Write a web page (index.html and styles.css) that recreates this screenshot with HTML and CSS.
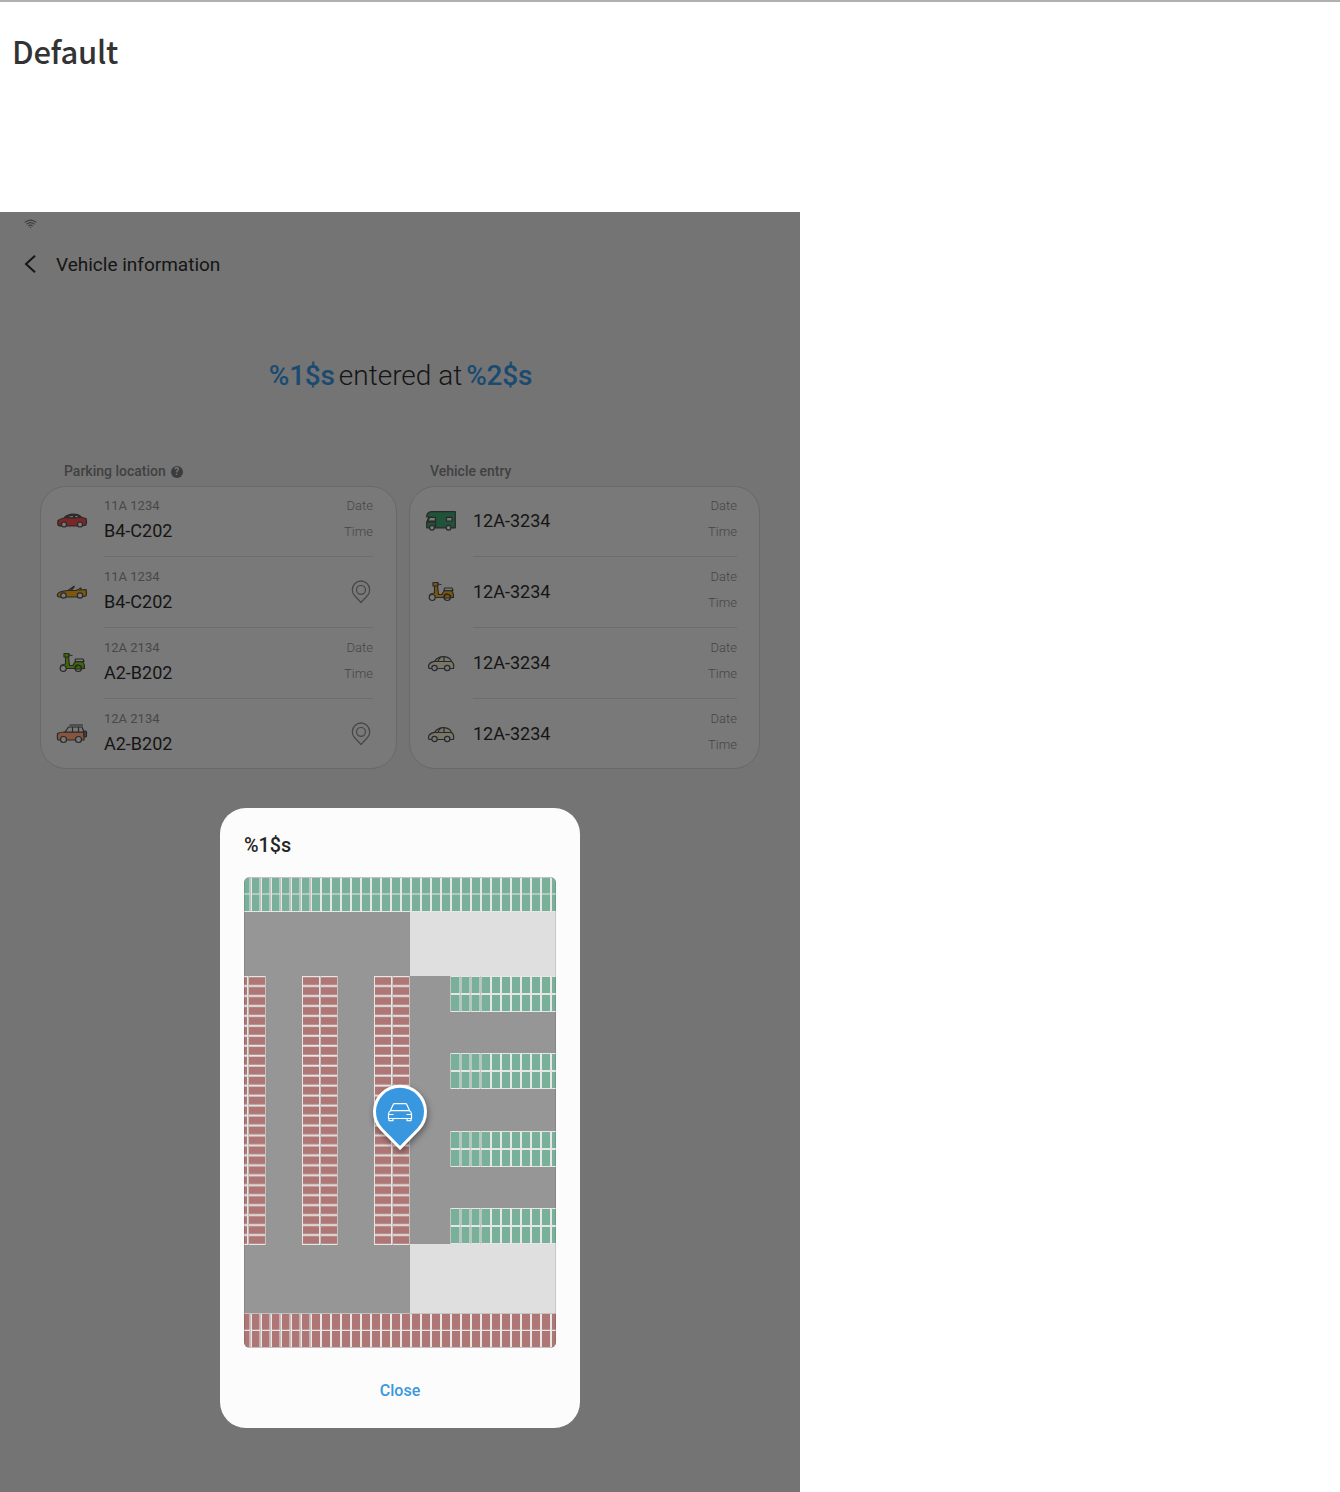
FILE: index.html
```
<!DOCTYPE html>
<html lang="en">
<head>
<meta charset="utf-8">
<title>Vehicle information</title>
<link rel="stylesheet" href="styles.css">
</head>
<body>
<svg class="defs" width="0" height="0" aria-hidden="true">
  <defs>
    <symbol id="sedan" viewBox="0 0 32 32">
      <path class="body" d="M2 15.500Q5 13.500 8 13Q11 9.500 17 9.200Q22 9 26 12.500L30 13.500Q31 17 30 20L26 21H4Q1.500 20.500 1.800 18Z"/>
      <path class="window" d="M10.500 12.800Q13 10.200 17 10.100L18 12.800ZM18.500 10Q22 10.300 24 12.500L19 12.800Z"/>
      <circle class="wheel" cx="8" cy="19.500" r="2.500"/><circle class="wheel" cx="24" cy="19.500" r="2.500"/>
    </symbol>
    <symbol id="convertible" viewBox="0 0 32 32">
      <path class="body" d="M1.500 18Q3 15.300 12 14.500L20 14.500L22 13.500L24 14L30 13.500Q31 17 30 20L25 21H3Q1 21 1.500 18Z"/>
      <path class="line" d="M12 14.500L18.500 10M15 14.500L18.500 10.500M23 12.500L25 12V14"/>
      <circle class="wheel" cx="7.500" cy="19.500" r="2.700"/><circle class="wheel" cx="24" cy="19.500" r="2.700"/>
    </symbol>
    <symbol id="scooter" viewBox="0 0 32 32">
      <path class="body" d="M8 6.500L13 6.500V10H8ZM9.500 10H12.500L13.500 18.500H17Q18 15 21 14.500L27 15Q29 18 28.500 21.500H8L4.500 19.500Q5 17.500 9.500 17Z"/>
      <path class="line" d="M12 8L16.500 8.500"/>
      <path class="wheel" d="M19.500 12H27L28 14.500H19Z"/>
      <circle class="wheel" cx="7.200" cy="21.500" r="3"/><path class="body" d="M18.500 22Q19 17.500 22.500 18Q26 18.500 26 22Z"/><circle class="line" cx="22.300" cy="21.500" r="3"/>
    </symbol>
    <symbol id="suv" viewBox="0 0 32 32">
      <path class="body" d="M1.500 15.500Q4 14 8.500 14H28V22H2Q1 21 1.500 15.500Z"/>
      <path class="window" d="M9 14L12.500 9H26L28 14ZM16.500 9V14M22.500 9V14M13.500 7H27"/>
      <rect class="tyre" x="28" y="13" width="2.500" height="6" rx="1"/>
      <circle class="wheel" cx="7.500" cy="21.500" r="3"/><circle class="wheel" cx="22.500" cy="21.500" r="3"/>
    </symbol>
    <symbol id="camper" viewBox="0 0 32 32">
      <path class="body" d="M1.700 10.500Q3 6.700 7 6.700H30.300V22.800H1.700V17L4 12H1.700Z"/>
      <path class="glass" d="M4.500 12.300H10.500V16H3ZM21.500 12.300H27V16H21.500Z"/>
      <path class="line" d="M10.500 12V22.500M1.500 16.800H10.500"/>
      <circle class="wheel" cx="7" cy="22.800" r="2.400"/><circle class="wheel" cx="23.500" cy="22.800" r="2.400"/>
    </symbol>
    <symbol id="compact" viewBox="0 0 32 32">
      <path class="body" d="M3.500 19.500Q3.500 15.500 9.500 14.300Q13 9.500 19 9.700Q25 10 26.500 14.500Q29.500 16.500 28.500 21.500H4.500Q3.300 21 3.500 19.500Z"/>
      <path class="line" d="M10 14.500H26M19 10V14.500M13 14.300Q14 11 16 10.200"/>
      <circle class="wheel" cx="9.500" cy="21" r="2.700"/><circle class="wheel" cx="22.200" cy="21" r="2.700"/>
    </symbol>
    <symbol id="place" viewBox="0 0 24 24">
      <path d="M12 22.500L5.500 15.500A8.700 8.700 0 1 1 18.500 15.500Z"/><circle cx="12" cy="9.800" r="4.500"/>
    </symbol>
    <pattern id="greenTop" width="10" height="35" patternUnits="userSpaceOnUse">
      <rect class="free" width="10" height="35"/>
      <path class="mark" d="M6 0h2v35h-2zM0 16.500h10v1h-10zM0 34h10v1h-10z"/><path class="edge" d="M0 0h10v1h-10z"/>
    </pattern>
    <pattern id="redBottom" y="436" width="10" height="35" patternUnits="userSpaceOnUse">
      <rect class="taken" width="10" height="35"/>
      <path class="mark" d="M6 0h2v35h-2zM0 16.700h10v1.300h-10z"/><path class="edge" d="M0 0h10v1h-10zM0 34h10v1h-10z"/>
    </pattern>
    <pattern id="rowsRed" y="98.300" width="36" height="9.960" patternUnits="userSpaceOnUse">
      <rect class="taken" width="36" height="10"/><path class="mark" d="M0 9.700h36v.260h-36zM0 0h36v1.700h-36z"/>
    </pattern>
    <path id="softLines" class="soft" d="M5 1h1v33h-1zM15 1h1v33h-1zM25 1h1v33h-1zM35 1h1v33h-1zM45 1h1v33h-1zM55 1h1v33h-1zM65 1h1v33h-1z"/>
    <g id="greenBay">
      <rect class="free" width="106" height="36"/>
      <path class="mark" d="M0 0h106v1h-106zM0 17h106v2h-106zM0 35h106v1h-106zM10 0h1v36h-1zM20 0h1v36h-1zM30 0h1v36h-1zM40 0h2v36h-2zM50 0h2v36h-2zM60 0h2v36h-2zM70 0h2v36h-2zM80 0h2v36h-2zM90 0h2v36h-2zM100 0h2v36h-2z"/>
      <path class="edge" d="M0 0h1v36h-1zM10 0h1v36h-1zM20 0h1v36h-1zM30 0h1v36h-1z"/>
      <path class="soft" d="M9 1h1v34h-1zM11 1h1v34h-1zM19 1h1v34h-1zM21 1h1v34h-1zM29 1h1v34h-1zM31 1h1v34h-1z"/>
    </g>
    <g id="bayFrame"><path class="mark" d="M0 0h36v1h-36zM0 0h1v269h-1zM17 0h1v269h-1zM0 268h36v1h-36z"/><path class="edge" d="M18 0h1v269h-1zM35 0h1v269h-1z"/></g>
  </defs>
</svg>

<header class="page-head"><h1>Default</h1></header>

<main class="screen">
  <div class="status">
    <svg class="wifi" viewBox="0 0 14 10"><path d="M.7 3.300Q7-1.800 13.300 3.300M2.700 5.300Q7 1.800 11.300 5.300M4.700 7.200Q7 5.300 9.300 7.200"/><circle cx="7" cy="8.900" r=".8"/></svg>
  </div>
  <nav class="bar">
    <svg class="back" viewBox="0 0 12 18"><path d="M11 .800L2 9L11 17.200"/></svg>
    <span class="bar-title">Vehicle information</span>
  </nav>
  <p class="notice"><b>%1$s</b><span>entered at</span><b>%2$s</b></p>

  <div class="columns">
    <section class="parking">
      <h2>Parking location <span class="help">?</span></h2>
      <ul class="card">
        <li><svg class="car red"><use href="#sedan"/></svg><div class="row"><div class="id"><small>11A 1234</small><span>B4-C202</span></div><div class="when"><span>Date</span><span>Time</span></div></div></li>
        <li><svg class="car amber"><use href="#convertible"/></svg><div class="row"><div class="id"><small>11A 1234</small><span>B4-C202</span></div><svg class="place"><use href="#place"/></svg></div></li>
        <li><svg class="car lime"><use href="#scooter"/></svg><div class="row"><div class="id"><small>12A 2134</small><span>A2-B202</span></div><div class="when"><span>Date</span><span>Time</span></div></div></li>
        <li><svg class="car copper"><use href="#suv"/></svg><div class="row"><div class="id"><small>12A 2134</small><span>A2-B202</span></div><svg class="place"><use href="#place"/></svg></div></li>
      </ul>
    </section>
    <section class="entry">
      <h2>Vehicle entry</h2>
      <ul class="card">
        <li><svg class="car green"><use href="#camper"/></svg><div class="row"><div class="id"><span>12A-3234</span></div><div class="when"><span>Date</span><span>Time</span></div></div></li>
        <li><svg class="car amber"><use href="#scooter"/></svg><div class="row"><div class="id"><span>12A-3234</span></div><div class="when"><span>Date</span><span>Time</span></div></div></li>
        <li><svg class="car sand"><use href="#compact"/></svg><div class="row"><div class="id"><span>12A-3234</span></div><div class="when"><span>Date</span><span>Time</span></div></div></li>
        <li><svg class="car sand"><use href="#compact"/></svg><div class="row"><div class="id"><span>12A-3234</span></div><div class="when"><span>Date</span><span>Time</span></div></div></li>
      </ul>
    </section>
  </div>

  <div class="dialog" role="dialog">
    <h3>%1$s</h3>
    <div class="map">
      <svg viewBox="0 0 312 471" width="312" height="471" shape-rendering="crispEdges">
        <rect class="road" width="312" height="471"/>
        <path class="block" d="M166 35h146v64h-146zM166 367h146v69h-146z"/>
        <rect width="312" height="35" fill="url(#greenTop)"/>
        <rect y="436" width="312" height="35" fill="url(#redBottom)"/>
        <path class="edge" d="M6 1h1v33h-1zM16 1h1v33h-1zM26 1h1v33h-1zM36 1h1v33h-1zM46 1h1v33h-1zM56 1h1v33h-1zM66 1h1v33h-1zM6 437h1v33h-1zM16 437h1v33h-1zM26 437h1v33h-1zM36 437h1v33h-1zM46 437h1v33h-1zM56 437h1v33h-1zM66 437h1v33h-1z"/>
        <use href="#softLines"/><use href="#softLines" y="436"/>
        <rect y="99" width="22" height="269" fill="url(#rowsRed)"/>
        <rect x="58" y="99" width="36" height="269" fill="url(#rowsRed)"/>
        <rect x="130" y="99" width="36" height="269" fill="url(#rowsRed)"/>
        <use href="#bayFrame" x="-14" y="99"/><use href="#bayFrame" x="58" y="99"/><use href="#bayFrame" x="130" y="99"/>
        <use href="#greenBay" x="206" y="99"/><use href="#greenBay" x="206" y="176"/><use href="#greenBay" x="206" y="254"/><use href="#greenBay" x="206" y="331"/>
        <path class="shade" d="M0 0h1v471h-1zM311 0h1v471h-1z"/>
      </svg>
      <svg class="pin" viewBox="0 0 70 80">
        <path class="drop" d="M35 65L16.500 46.300A25.500 25.500 0 1 1 53.500 46.300Z"/>
        <path class="auto" d="M25.200 28L28.200 21.500Q28.500 20.700 29.500 20.700H40.500Q41.500 20.700 41.800 21.500L44.800 28M25.700 27.700H44.300Q46.500 28.500 46.500 31V35.500H23.500V31Q23.500 28.500 25.700 27.700ZM24 35.500V37.600H28V35.500M42 35.500V37.600H46V35.500M24 31.500H28.500M46 31.500H41.500"/>
      </svg>
    </div>
    <button class="close">Close</button>
  </div>
</main>
</body>
</html>
```
FILE: styles.css
```
* { box-sizing: border-box; }
body { margin: 0; background: #fff; font-family: Roboto, sans-serif; height: 1492px; overflow: hidden; }
.defs { position: absolute; }
h1, h2, h3, p, ul { margin: 0; padding: 0; }
.page-head { height: 212px; border-top: 2px solid #b0b0b0; padding: 25px 12px 0; }
h1 { font: 500 31px/48px "Noto Sans CJK KR", sans-serif; letter-spacing: -.25px; color: #333; }

.screen { position: relative; width: 800px; height: 1280px; background: #747474; color: #151515; }
.status { height: 24px; padding: 7px 0 0 24px; }
.wifi { display: block; width: 13px; height: 10px; fill: none; stroke: #3c3c3c; stroke-width: 1.2; }
.wifi circle { fill: #3c3c3c; stroke: none; }
.bar { display: flex; align-items: center; height: 56px; padding-left: 24px; gap: 20px; }
.back { width: 12px; height: 18px; fill: none; stroke: #151515; stroke-width: 2; }
.bar-title { padding-top: 2px; font-size: 19px; line-height: 24px; }
.notice { display: flex; justify-content: center; gap: 4px; margin-top: 64px; padding-left: 1px; height: 40px; font-size: 28px; line-height: 40px; font-weight: 300; }
.notice b { font-weight: 500; letter-spacing: -.2px; color: #1b4a70; }

.columns { display: flex; gap: 12px; padding: 65px 40px 0; }
.parking { width: 357px; }
.entry { width: 351px; }
h2 { display: flex; align-items: center; gap: 5px; height: 25px; padding: 0 0 5px 24px; font-size: 14px; line-height: 20px; font-weight: 500; color: #414141; }
.entry h2 { padding-left: 21px; }
.help { width: 12px; height: 12px; margin-top: 2px; border-radius: 50%; background: #3c3c3c; color: #777; font-size: 10px; line-height: 12px; font-weight: 700; text-align: center; }
.card { height: 283px; list-style: none; background: #797979; border: 1px solid #696969; border-radius: 26px; overflow: hidden; }
.card li { display: flex; height: 71px; padding: 0 23px 0 15px; }
.card li:first-child { height: 70px; }
.entry li { padding-right: 22px; }
.car { flex: none; width: 32px; height: 32px; margin: 19px 16px 0 0; stroke: #292929; stroke-width: 1.2; stroke-linejoin: round; }
.card li:first-child .car { margin-top: 18px; }
.row { flex: 1; display: flex; justify-content: space-between; align-items: center; border-bottom: 1px solid #6d6d6d; }
.card li:first-child .row { margin-top: -1px; }
.card li:last-child .row { border-color: transparent; }
.id { display: flex; flex-direction: column; font-size: 18px; }
.id small { font-size: 13px; line-height: 20px; color: #484848; }
.id span { line-height: 30px; }
.when { display: flex; flex-direction: column; align-items: flex-end; padding-bottom: 4px; font-size: 13px; line-height: 26px; font-weight: 300; color: #454545; }
.place { width: 24px; height: 24px; fill: none; stroke: #484848; stroke-width: 1.3; }
.body { fill: var(--paint); }
.line { fill: none; }
.window, .wheel, .glass { fill: #797979; }
.tyre { fill: #444; }
.red { --paint: #792727; }
.amber { --paint: #7d570e; }
.lime { --paint: #3f6806; }
.copper { --paint: #84563f; }
.green { --paint: #20533a; }
.sand { --paint: #79766a; }

.dialog { position: absolute; left: 220px; top: 596px; width: 360px; height: 620px; padding: 24px 24px 0; display: flex; flex-direction: column; background: #fcfcfc; border-radius: 26px; }
h3 { flex: none; height: 45px; font-size: 19.800px; line-height: 27px; font-weight: 500; color: #252525; }
.map { position: relative; flex: none; height: 471px; border-radius: 6px; overflow: hidden; }
.map > svg { display: block; }
.road { fill: #969696; }
.block { fill: #dfdfdf; }
.free { fill: #79b09a; }
.taken { fill: #ae7775; }
.mark { fill: #e6e6e6; }
.edge { fill: #c4c2c0; }
.soft { fill: #e6e6e6; fill-opacity: .5; }
.shade { fill: #000; fill-opacity: .1; }
.pin { position: absolute; left: 121px; top: 206px; width: 70px; height: 80px; filter: drop-shadow(1px 3px 3px rgba(0, 0, 0, .4)); }
.drop { fill: #3897df; stroke: #fff; stroke-width: 3; }
.auto { fill: none; stroke: #fff; stroke-width: 1.2; }
.close { align-self: center; margin: 29px 0 0; padding: 0; border: 0; background: none; font: 500 16px/28px Roboto, sans-serif; color: #3897df; }
```
